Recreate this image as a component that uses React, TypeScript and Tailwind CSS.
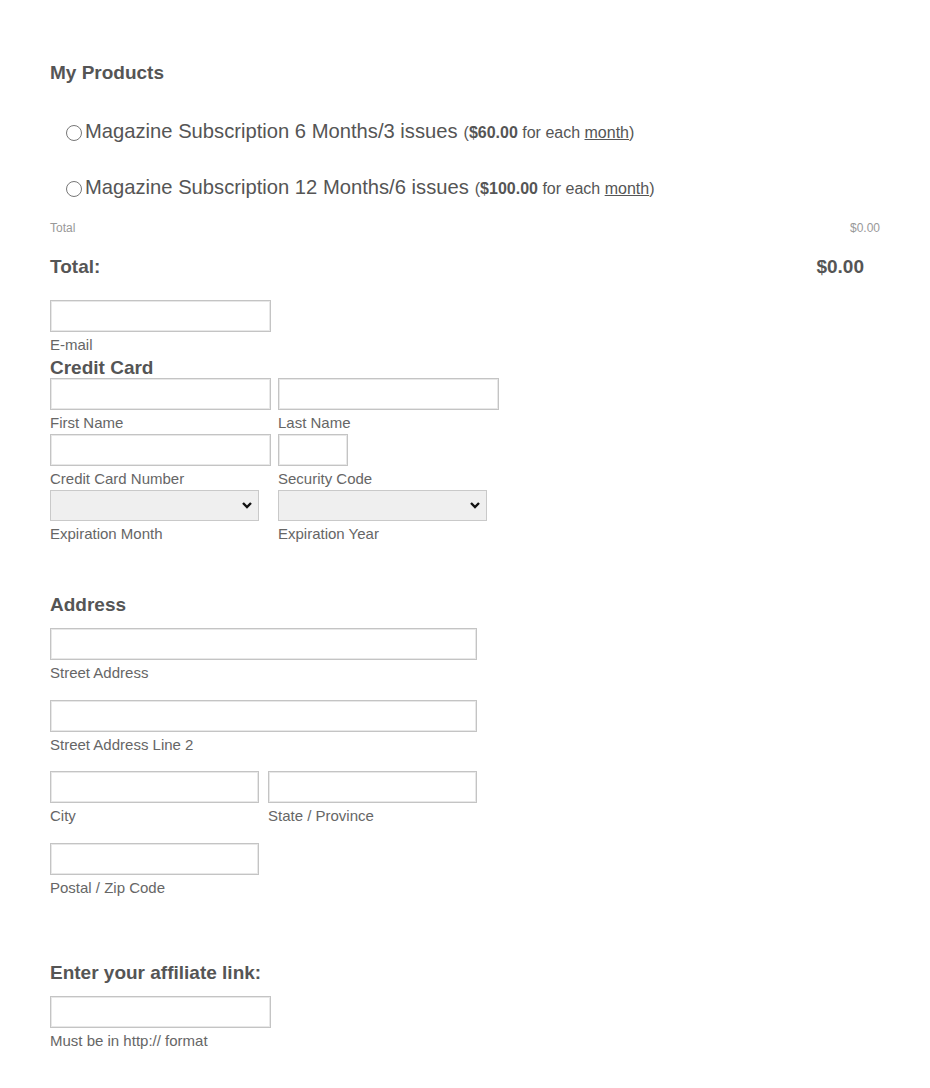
import { ReactNode } from "react";

const font = { fontFamily: '"Liberation Sans", Arial, sans-serif' };

function TextBox({ w }: { w: string }) {
  return (
    <input
      type="text"
      className={`${w} h-[32px] bg-white border border-[#c4c4c4] shadow-[inset_0_0_0_1px_#e8e8e8] outline-none`}
    />
  );
}

function SelectBox() {
  return (
    <div className="relative w-[209px] h-[31px]">
      <select className="appearance-none w-full h-full bg-[#efefef] border border-[#c9c9c9] outline-none" />
      <svg
        className="absolute right-[6px] top-[10px] pointer-events-none"
        width="12"
        height="10"
        viewBox="0 0 12 10"
      >
        <path d="M2 3l4 4 4-4" stroke="#111" strokeWidth="2.4" fill="none" />
      </svg>
    </div>
  );
}

function Label({ children }: { children: ReactNode }) {
  return <div className="mt-[5px] text-[15px] leading-[16px] text-[#666]">{children}</div>;
}

function Field({ w, label }: { w: string; label: string }) {
  return (
    <div className="flex flex-col">
      <TextBox w={w} />
      <Label>{label}</Label>
    </div>
  );
}

function Heading({ children, className = "" }: { children: ReactNode; className?: string }) {
  return (
    <div className={`text-[19px] leading-[20px] font-bold text-[#555] ${className}`}>
      {children}
    </div>
  );
}

function Product({ title, price }: { title: string; price: string }) {
  return (
    <label className="flex items-center h-[56px] pl-[16px] text-[#555]">
      <input
        type="radio"
        name="product"
        className="appearance-none w-[16px] h-[16px] rounded-full border border-[#777] bg-white mt-[3px] mr-[3px]"
      />
      <span className="text-[20.2px] leading-[24px]">{title}</span>
      <span className="text-[16px] leading-[20px] ml-[6px] mt-[3px]">
        (<b>{price}</b> for each <span className="underline">month</span>)
      </span>
    </label>
  );
}

export default function App() {
  return (
    <div className="min-h-[1088px] bg-white" style={font}>
      <div className="w-[830px] ml-[50px] pt-[63px] pb-[38px] flex flex-col">
        <Heading>My Products</Heading>

        <div className="mt-[20px] flex flex-col">
          <Product title="Magazine Subscription 6 Months/3 issues" price="$60.00" />
          <Product title="Magazine Subscription 12 Months/6 issues" price="$100.00" />
        </div>

        <div className="mt-[6px] flex justify-between text-[12px] leading-[14px] text-[#999]">
          <span>Total</span>
          <span>$0.00</span>
        </div>

        <div className="mt-[22px] flex justify-between pr-[16px] text-[19px] leading-[20px] font-bold text-[#555]">
          <span>Total:</span>
          <span>$0.00</span>
        </div>

        <div className="mt-[23px]">
          <Field w="w-[221px]" label="E-mail" />
        </div>

        <Heading className="mt-[5px]">Credit Card</Heading>
        <div className="flex gap-[7px]">
          <Field w="w-[221px]" label="First Name" />
          <Field w="w-[221px]" label="Last Name" />
        </div>
        <div className="mt-[3px] flex gap-[7px]">
          <Field w="w-[221px]" label="Credit Card Number" />
          <Field w="w-[70px]" label="Security Code" />
        </div>
        <div className="mt-[3px] flex gap-[19px]">
          <div className="flex flex-col">
            <SelectBox />
            <Label>Expiration Month</Label>
          </div>
          <div className="flex flex-col">
            <SelectBox />
            <Label>Expiration Year</Label>
          </div>
        </div>

        <Heading className="mt-[53px]">Address</Heading>
        <div className="mt-[13px]">
          <Field w="w-[427px]" label="Street Address" />
        </div>
        <div className="mt-[19px]">
          <Field w="w-[427px]" label="Street Address Line 2" />
        </div>
        <div className="mt-[18px] flex gap-[9px]">
          <Field w="w-[209px]" label="City" />
          <Field w="w-[209px]" label="State / Province" />
        </div>
        <div className="mt-[19px]">
          <Field w="w-[209px]" label="Postal / Zip Code" />
        </div>

        <Heading className="mt-[67px]">Enter your affiliate link:</Heading>
        <div className="mt-[13px]">
          <Field w="w-[221px]" label="Must be in http:// format" />
        </div>
      </div>
    </div>
  );
}
